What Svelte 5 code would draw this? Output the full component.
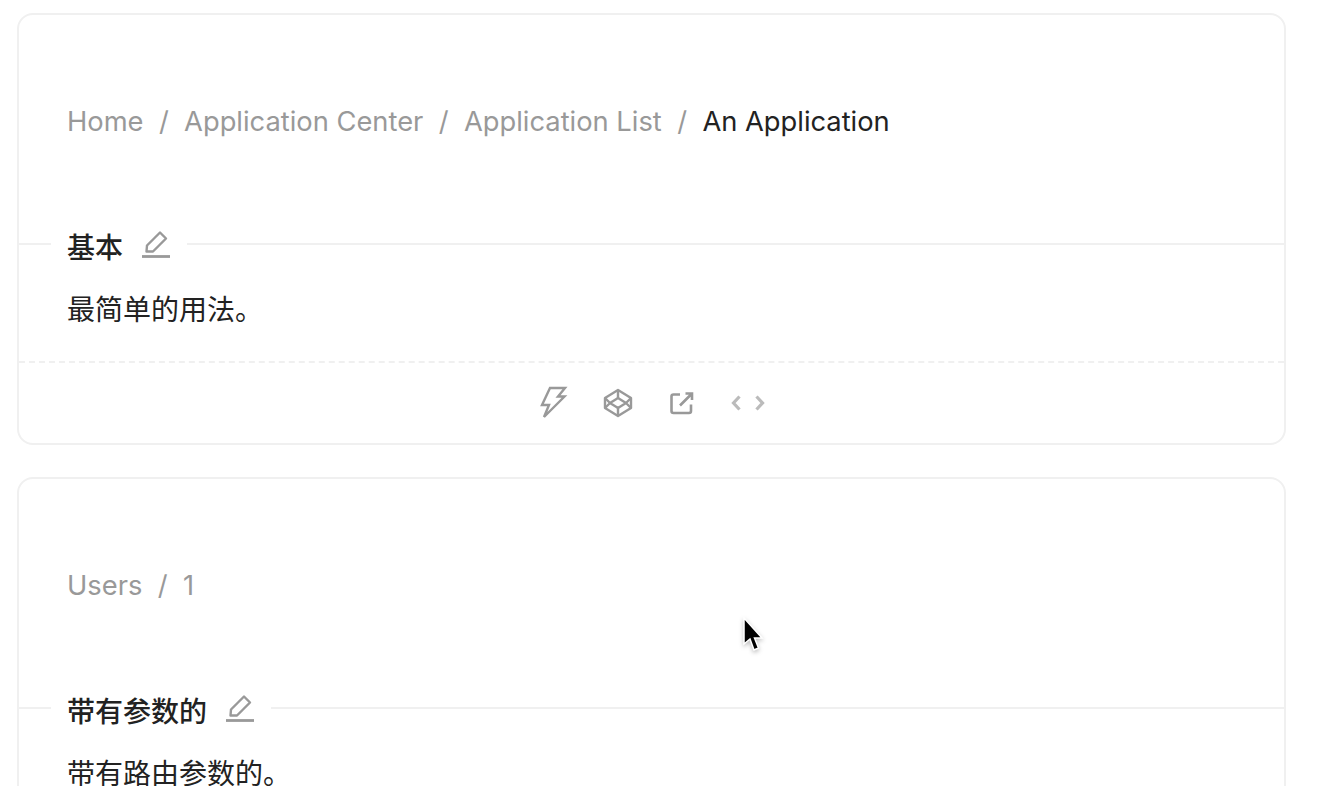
<script lang="ts">
  type Demo = { crumbs: string[]; current?: string; title: string; desc: string; actions: boolean };

  const demos: Demo[] = [
    {
      crumbs: ["Home", "Application Center", "Application List"],
      current: "An Application",
      title: "基本",
      desc: "最简单的用法。",
      actions: true,
    },
    {
      crumbs: ["Users", "1"],
      title: "带有参数的",
      desc: "带有路由参数的。",
      actions: false,
    },
  ];
</script>

{#snippet pencil()}
  <svg class="edit" width="30" height="30" viewBox="0 0 30 30" fill="none" stroke="#999" stroke-width="2.4">
    <path d="M5.5 22.5 L6 16.5 L19 3.5 L25 9.5 L12 22.5 Z" stroke-linejoin="round" />
    <path d="M1 27.5 H29" stroke-width="2.8" />
  </svg>
{/snippet}

<div class="page">
  {#each demos as demo}
    <section class="card">
      <div class="demo">
        <nav class="crumbs">
          {#each demo.crumbs as c, i}
            {#if i > 0}<span class="sep">/</span>{/if}
            <span>{c}</span>
          {/each}
          {#if demo.current}
            <span class="sep">/</span>
            <span class="current">{demo.current}</span>
          {/if}
        </nav>
      </div>
      <div class="meta">
        <div class="title">
          <span class="label">{demo.title}</span>
          {@render pencil()}
        </div>
        <p class="desc">{demo.desc}</p>
      </div>
      {#if demo.actions}
        <div class="actions">
          <svg class="slot" width="32" height="34" viewBox="0 0 32 34" fill="none" stroke="#999" stroke-width="2.4">
            <path d="M12 2 H27 L20 10.5 H26.5 L6 31 L11 19 H4 Z" />
          </svg>
          <svg class="slot" width="32" height="32" viewBox="0 0 32 32" fill="none" stroke="#999" stroke-width="2.4" stroke-linejoin="round">
            <path d="M16 3 L29 11 V21 L16 29 L3 21 V11 Z" />
            <path d="M16 11 L24 16 L16 21 L8 16 Z" />
            <path d="M16 3 V11 M16 21 V29 M3 11 L8 16 M29 11 L24 16 M3 21 L8 16 M29 21 L24 16" />
          </svg>
          <svg class="slot" width="32" height="26" viewBox="0 0 32 26" fill="none" stroke="#999" stroke-width="2.6">
            <path d="M14 4.5 H7.5 Q5.5 4.5 5.5 6.5 V21 Q5.5 23 7.5 23 H23 Q25 23 25 21 V14.5" />
            <path d="M14 15.5 L25 4.5 M19.5 3.5 H26 V10" />
          </svg>
          <svg class="code" width="36" height="20" viewBox="0 0 36 20" fill="none" stroke="#bbb" stroke-width="3.2">
            <path d="M9.5 3.5 L3.5 10 L9.5 16.5 M26.5 3.5 L32.5 10 L26.5 16.5" />
          </svg>
        </div>
      {/if}
    </section>
  {/each}
  <svg class="cursor" width="24" height="36" viewBox="0 0 24 36">
    <path d="M2 1 V27 L8 22 L12 33 L16.5 31 L12.5 21 H20 Z" fill="#000" stroke="#fff" stroke-width="1.5" />
  </svg>
</div>

<style>
  :global(body) {
    margin: 0;
    background: #fff;
    overflow: hidden;
  }
  .page {
    position: relative;
    height: 786px;
    overflow: hidden;
    box-sizing: border-box;
    padding: 13px 32px 0 17px;
    display: flex;
    flex-direction: column;
    gap: 32px;
    font-family: Inter, "Noto Sans CJK SC", sans-serif;
    color: #222;
  }
  .card {
    flex-shrink: 0;
    border: 2px solid #f0f0f0;
    border-radius: 16px;
  }
  .demo {
    padding: 99px 48px 113px;
    line-height: 16px;
  }
  .crumbs {
    display: flex;
    gap: 15.4px;
    font-size: 27.3px;
    line-height: 36px;
    margin: -10px 0;
    color: #999;
  }
  .current {
    color: #222;
  }
  .meta {
    border-top: 2px solid #f0f0f0;
    padding: 0 48px;
    position: relative;
  }
  .title {
    position: absolute;
    top: -17px;
    left: 32px;
    display: flex;
    align-items: center;
    gap: 18px;
    padding: 0 16px;
    background: #fff;
    font-size: 28px;
    font-weight: 500;
    line-height: 32px;
  }
  .label {
    position: relative;
    top: 4px;
  }
  .desc {
    margin: 0;
    padding: 46px 0 32px;
    font-size: 28px;
    line-height: 38px;
  }
  .actions {
    border-top: 2px dashed #f0f0f0;
    height: 80px;
    display: flex;
    align-items: center;
    justify-content: center;
    gap: 32px;
  }
  .cursor {
    position: absolute;
    left: 742px;
    top: 617px;
    filter: drop-shadow(0 2px 2px rgba(0, 0, 0, 0.25));
  }
</style>
